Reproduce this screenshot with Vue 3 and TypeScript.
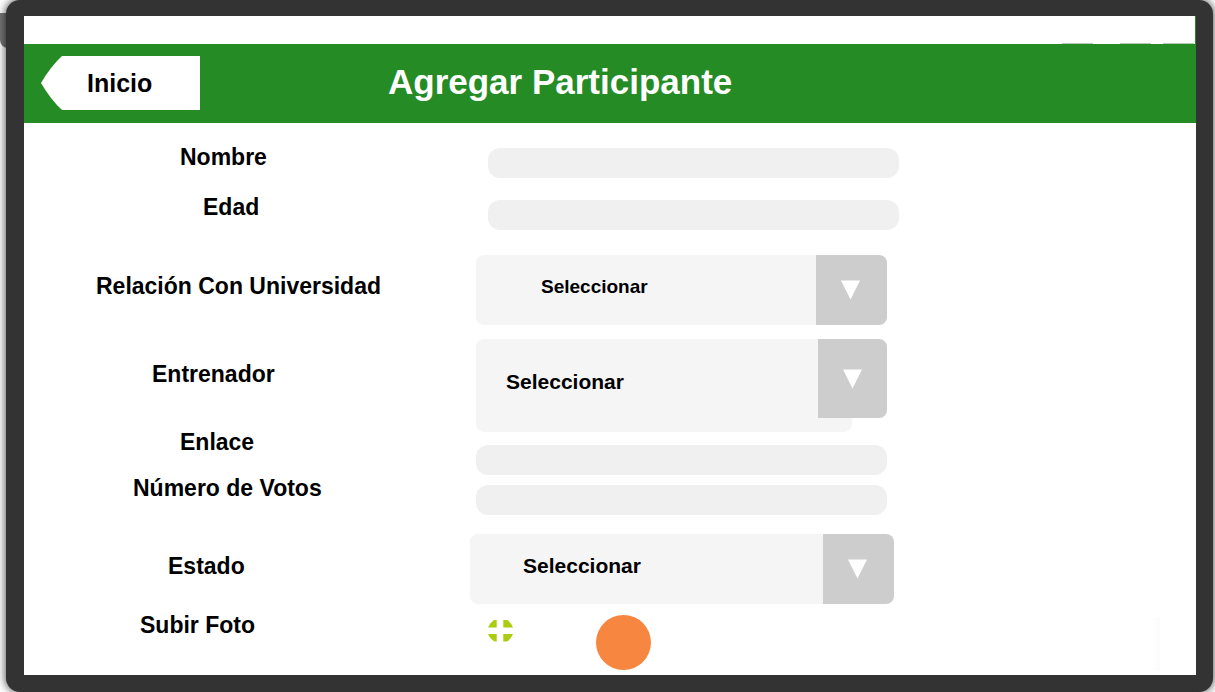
<script setup lang="ts">
import { ref } from 'vue'

const name = ref('')
const age = ref('')
const link = ref('')
const votes = ref('')
const relation = ref('Seleccionar')
const trainer = ref('Seleccionar')
const status = ref('Seleccionar')
</script>

<template>
  <div class="stage">
    <span class="side-key"></span>
    <main class="device">
      <div class="screen">
        <div class="top-strip"><i></i><i></i><i></i></div>
        <header class="bar">
          <button type="button" class="home">
            <svg class="home-shape" viewBox="0 0 159 54" preserveAspectRatio="none" aria-hidden="true">
              <path d="M21 0H159V54H21Q10 44 0 27Q10 10 21 0Z" fill="#fff" />
            </svg>
            <span class="home-text">Inicio</span>
          </button>
          <h1>Agregar Participante</h1>
        </header>

        <form class="form" @submit.prevent>
          <div class="labels">
            <label class="l-name" for="name">Nombre</label>
            <label class="l-age" for="age">Edad</label>
            <label class="l-relation" for="relation">Relación Con Universidad</label>
            <label class="l-trainer" for="trainer">Entrenador</label>
            <label class="l-link" for="link">Enlace</label>
            <label class="l-votes" for="votes">Número de Votos</label>
            <label class="l-status" for="status">Estado</label>
            <label class="l-photo" for="photo">Subir Foto</label>
          </div>

          <div class="fields">
            <input id="name" v-model="name" class="text wide-in" type="text" />
            <input id="age" v-model="age" class="text wide-in f-age" type="text" />

            <div class="pick f-relation">
              <select id="relation" v-model="relation"><option>Seleccionar</option></select>
              <span class="arrow"><svg viewBox="0 0 20 20" aria-hidden="true"><path d="M0 0H20L10 20Z" fill="#fff" /></svg></span>
            </div>
            <div class="pick f-trainer">
              <select id="trainer" v-model="trainer"><option>Seleccionar</option></select>
              <span class="arrow"><svg viewBox="0 0 20 20" aria-hidden="true"><path d="M0 0H20L10 20Z" fill="#fff" /></svg></span>
            </div>

            <input id="link" v-model="link" class="text f-link" type="text" />
            <input id="votes" v-model="votes" class="text f-votes" type="text" />

            <div class="pick f-status">
              <select id="status" v-model="status"><option>Seleccionar</option></select>
              <span class="arrow"><svg viewBox="0 0 20 20" aria-hidden="true"><path d="M0 0H20L10 20Z" fill="#fff" /></svg></span>
            </div>

            <div class="photo">
              <button id="photo" type="button" class="add" aria-label="Subir Foto">
                <svg width="25" height="22" viewBox="0 0 25 22" aria-hidden="true">
                  <path
                    fill="#aacc11"
                    d="M8.7 0V7.5H0Q2 2.5 6 0ZM15.3 0H19.5Q23 2.5 25 7.5H15.3ZM8.7 14V21.5H6.5Q2 19 0 14ZM15.3 14H25Q23 19 19 21.5H15.3Z"
                  />
                </svg>
              </button>
              <button type="button" class="dot" aria-label="Foto"></button>
            </div>
          </div>
        </form>
        <span class="haze"></span>
      </div>
    </main>
  </div>
</template>

<style>
html,
body {
  background: #fff;
}
</style>

<style scoped>
* {
  box-sizing: border-box;
}
.stage {
  position: relative;
  min-height: 100vh;
  padding: 0 2px 0 6px;
  overflow: hidden;
  display: flex;
  font-family: "Liberation Sans", Arial, sans-serif;
  font-weight: 700;
  color: #000;
}
.side-key {
  position: absolute;
  left: 0;
  top: 13px;
  width: 12px;
  height: 35px;
  background: #777;
  border-radius: 0 0 0 8px;
}
.device {
  position: relative;
  flex: 1;
  display: flex;
  padding: 16px 17px 17px 18px;
  background: #333;
  border-radius: 14px;
  box-shadow: 0 0 8px 1px rgba(0, 0, 0, 0.65);
}
.screen {
  position: relative;
  flex: 1;
  min-width: 0;
  background: #fff;
}
.top-strip {
  height: 28px;
  border-right: 1px solid #258b25;
  display: flex;
  justify-content: flex-end;
  align-items: flex-end;
  padding-right: 1px;
}
.top-strip i {
  width: 31px;
  height: 1px;
  background: #b4cab4;
}
.top-strip i:nth-child(2) {
  margin: 0 12px 0 27px;
}
.bar {
  display: grid;
  grid-template-columns: 347px 1fr;
  height: 79px;
  padding: 12px 0 0 17px;
  background: #258b25;
}
.home {
  position: relative;
  width: 159px;
  height: 54px;
  padding: 0 0 0 46px;
  border: 0;
  background: none;
  font: 700 25px/54px "Liberation Sans", Arial, sans-serif;
  color: #000;
  text-align: left;
}
.home-shape {
  position: absolute;
  inset: 0;
  width: 100%;
  height: 100%;
}
.home-text {
  position: relative;
}
h1 {
  margin: 0;
  font-size: 35px;
  line-height: 52px;
  color: #fff;
}
.form {
  display: grid;
  grid-template-columns: 446px minmax(0, 429px);
}
.labels {
  display: flex;
  flex-direction: column;
  padding-top: 20px;
  font-size: 23px;
  line-height: 28px;
  white-space: nowrap;
}
.l-name {
  padding-left: 156px;
}
.l-age {
  margin-top: 22px;
  padding-left: 179px;
}
.l-relation {
  margin-top: 51px;
  padding-left: 72px;
}
.l-trainer {
  margin-top: 60px;
  padding-left: 128px;
}
.l-link {
  margin-top: 40px;
  padding-left: 156px;
}
.l-votes {
  margin-top: 18px;
  padding-left: 109px;
}
.l-status {
  margin-top: 50px;
  padding-left: 144px;
}
.l-photo {
  margin-top: 31px;
  padding-left: 116px;
}
.fields {
  display: flex;
  flex-direction: column;
  padding-top: 25px;
}
.text {
  height: 30px;
  margin: 0 12px 0 6px;
  padding: 0 12px;
  border: 0;
  border-radius: 12px;
  background: #f0f0f0;
  font: 700 19px "Liberation Sans", Arial, sans-serif;
}
.wide-in {
  margin: 0 0 0 18px;
}
.f-age {
  margin-top: 22px;
}
.f-link {
  margin-top: 13px;
}
.f-votes {
  margin-top: 10px;
}
.pick {
  position: relative;
  height: 70px;
  margin: 0 12px 0 6px;
}
.pick select {
  appearance: none;
  width: 100%;
  height: 100%;
  margin: 0;
  padding: 0 70px 8px 30px;
  border: 0;
  border-radius: 8px;
  background: #f5f5f5;
  font: 700 21px "Liberation Sans", Arial, sans-serif;
  color: #000;
}
.arrow {
  position: absolute;
  top: 0;
  right: 0;
  width: 71px;
  height: 70px;
  padding-right: 2px;
  display: flex;
  justify-content: center;
  align-items: center;
  border-radius: 0 8px 8px 0;
  background: #cdcdcd;
  pointer-events: none;
}
.arrow svg {
  width: 19px;
  height: 20px;
}
.f-relation {
  margin-top: 25px;
}
.f-relation select {
  padding-left: 65px;
  font-size: 19px;
}
.f-trainer {
  height: 93px;
  margin-top: 14px;
  padding-right: 35px;
}
.f-trainer .arrow {
  width: 69px;
  height: 79px;
  padding-right: 0;
}
.f-status {
  margin: 19px 5px 0 0;
}
.f-status select {
  padding-left: 53px;
}
.photo {
  display: flex;
  gap: 83px;
  margin-top: 11px;
  padding-left: 18px;
}
.add {
  width: 25px;
  height: 22px;
  margin-top: 5px;
  padding: 0;
  border: 0;
  background: none;
}
.add svg {
  display: block;
}
.dot {
  width: 55px;
  height: 55px;
  padding: 0;
  border: 0;
  border-radius: 50%;
  background: #f78640;
}
.haze {
  position: absolute;
  right: 36px;
  bottom: 4px;
  width: 8px;
  height: 54px;
  background: linear-gradient(90deg, #fff, #fbfbfb);
}
</style>
